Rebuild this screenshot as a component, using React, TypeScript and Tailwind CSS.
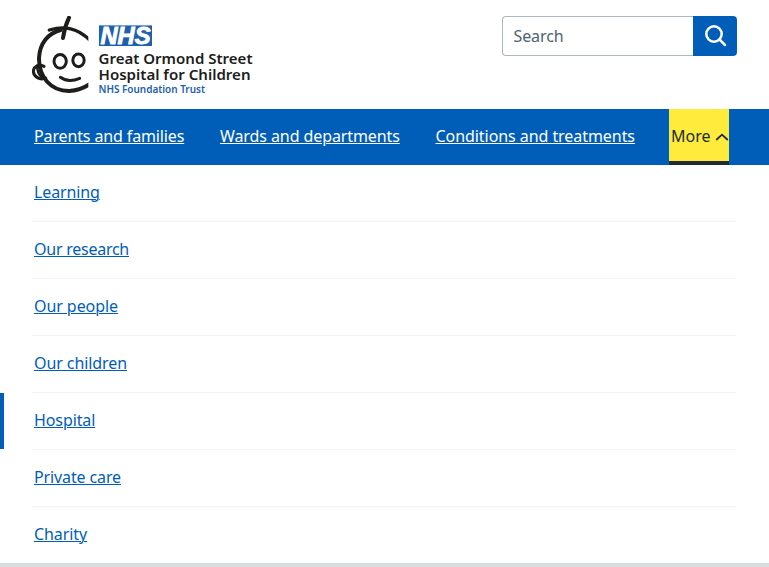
import React from "react";

const navLinks = [
  { label: "Parents and families", cls: "w-[186px] tracking-[-0.13px]" },
  { label: "Wards and departments", cls: "w-[215.5px] tracking-[-0.09px]" },
  { label: "Conditions and treatments", cls: "w-[233.5px] tracking-[-0.06px]" },
];

const menuLinks = [
  { label: "Learning", cls: "tracking-[-0.12px]" },
  { label: "Our research", cls: "tracking-[-0.25px]" },
  { label: "Our people", cls: "tracking-[-0.07px]" },
  { label: "Our children", cls: "tracking-[-0.08px]" },
  { label: "Hospital", cls: "tracking-[-0.1px]", current: true },
  { label: "Private care", cls: "tracking-[-0.12px]" },
  { label: "Charity", cls: "tracking-[-0.07px]" },
];

function Logo() {
  return (
    <a href="#" aria-label="Great Ormond Street Hospital for Children" className="block">
      <svg width="222" height="80" viewBox="0 0 222 80" fontFamily="'Noto Sans', sans-serif">
        <clipPath id="face-edge">
          <path d="M0 0H193V270H0Z" />
        </clipPath>
        <g transform="scale(0.33333) translate(-24 -24)">
          <g clipPath="url(#face-edge)" fill="none" stroke="#1d1d1b" strokeLinecap="round" strokeLinejoin="round">
            <path d="M135 29C126 48 121 62 117 90" strokeWidth="12" />
            <path d="M76 66C122 53 160 59 198 97" strokeWidth="10" />
            <path d="M110 66C72 76 47 106 45 150C44 207 81 250 136 249C160 248 180 240 198 228" strokeWidth="12" />
            <path d="M60 175C44 167 28 176 28 190C29 206 47 218 65 210" strokeWidth="9" />
            <path d="M40 172C38 188 44 201 57 212" strokeWidth="7" />
            <ellipse cx="108.500" cy="160" rx="18.500" ry="20.500" strokeWidth="9" />
            <ellipse cx="163.500" cy="157" rx="17" ry="19" strokeWidth="9" />
            <path d="M109 208C126 220 149 219 167 211" strokeWidth="9" />
          </g>
        </g>
        <rect x="67" y="9.4" width="53" height="20.6" fill="#1e60ae" />
        <text x="68.500" y="28" fontFamily="'Liberation Sans', Arial, sans-serif" fontSize="23.500" fontWeight="700" fontStyle="italic" fill="#fff" stroke="#fff" strokeWidth="0.9" textLength="50" lengthAdjust="spacingAndGlyphs">NHS</text>
        <text x="66.500" y="48.200" fontSize="15" fontWeight="600" fill="#1d1d1b" textLength="154" lengthAdjust="spacingAndGlyphs">Great Ormond Street</text>
        <text x="66.500" y="64.200" fontSize="15" fontWeight="600" fill="#1d1d1b" textLength="152" lengthAdjust="spacingAndGlyphs">Hospital for Children</text>
        <text x="66.500" y="77.200" fontSize="9.800" fontWeight="600" fill="#1e60ae" textLength="106.500" lengthAdjust="spacingAndGlyphs">NHS Foundation Trust</text>
      </svg>
    </a>
  );
}

export default function App() {
  return (
    <div className="flex h-[567px] w-full flex-col overflow-hidden bg-white font-['Noto_Sans',sans-serif] text-base text-[#212b32]">
      <header className="flex h-[109px] shrink-0 items-start justify-between px-8 pt-4">
        <Logo />
        <form className="flex h-10 w-[235px]">
          <input
            type="search"
            placeholder="Search"
            aria-label="Search"
            className="w-[191px] rounded-l border border-r-0 border-[#aeb7bd] pl-[10.5px] text-base tracking-[-0.1px] placeholder:text-[#4c6272]"
          />
          <button type="button" aria-label="Search" className="flex w-11 items-center justify-center rounded-r bg-[#005eb8]">
            <svg className="-mt-px ml-px" width="22" height="22" viewBox="0 0 22 22" fill="none" stroke="#fff" strokeWidth="2.500">
              <circle cx="9" cy="9" r="7.700" />
              <path d="M14.500 14.500L20 20" strokeLinecap="round" />
            </svg>
          </button>
        </form>
      </header>
      <nav className="flex h-14 shrink-0 bg-[#005eb8] pl-[34px] text-white">
        {navLinks.map((l) => (
          <div key={l.label} className={`${l.cls} shrink-0 whitespace-nowrap pt-[15px]`}>
            <a href="#" className="underline decoration-1 underline-offset-[1px]">{l.label}</a>
          </div>
        ))}
        <button type="button" className="flex h-14 w-[60px] items-start whitespace-nowrap border-b-4 border-[#212b32] bg-[#ffeb3b] pl-0.5 pt-[15px] text-[#212b32]">
          <span className="w-[44px] text-left">More</span>
          <svg className="mt-[9px]" width="14" height="8" viewBox="0 0 14 8" fill="none" stroke="#212b32" strokeWidth="1.800">
            <path d="M1.700 6.500L7 1.700L12.300 6.500" strokeLinecap="round" />
          </svg>
        </button>
      </nav>
      <ul className="h-[398px] shrink-0">
        {menuLinks.map((l) => (
          <li key={l.label} className={`group flex h-[57px] ${l.current ? "" : "pl-1"}`}>
            {l.current && <span className="h-14 w-1 bg-[#005eb8]" />}
            <div className={`${l.cls} ml-7 mr-[33px] grow border-b border-[#f0f4f5] pl-0.5 pt-[15px] group-last:border-b-0`}>
              <a href="#" className="text-[#005eb8] underline decoration-1 underline-offset-[1px]">{l.label}</a>
            </div>
          </li>
        ))}
      </ul>
      <div className="h-1 shrink-0 bg-[#d8dde0]" />
    </div>
  );
}
